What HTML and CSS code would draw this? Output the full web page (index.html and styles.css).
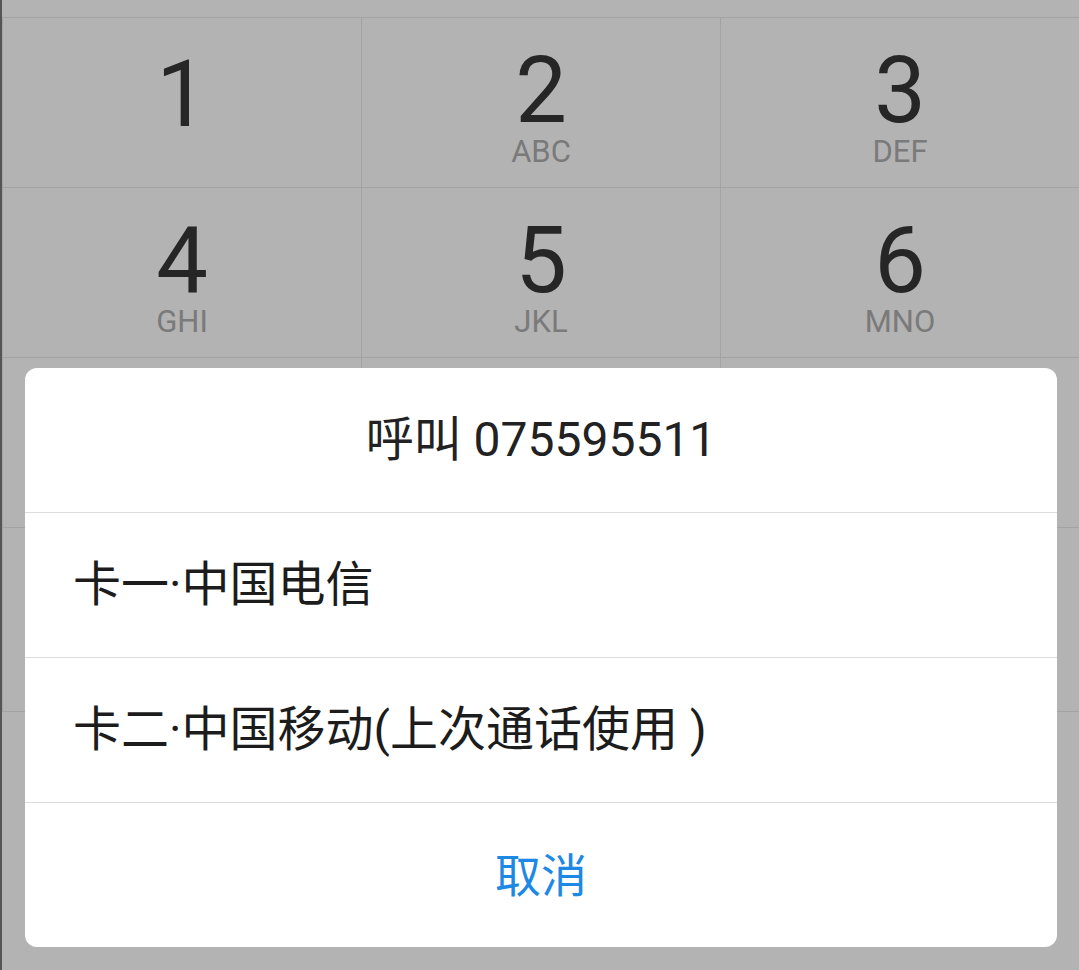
FILE: index.html
```html
<!DOCTYPE html>
<html lang="zh-CN">
<head>
<meta charset="utf-8">
<title>呼叫</title>
<link rel="stylesheet" href="styles.css">
</head>
<body>
<div class="page">
  <div class="top-strip"></div>
  <div class="pad">
    <div class="key key-solo"><span class="digit">1</span></div>
    <div class="key"><span class="digit">2</span><span class="letters">ABC</span></div>
    <div class="key"><span class="digit">3</span><span class="letters">DEF</span></div>
    <div class="key"><span class="digit">4</span><span class="letters">GHI</span></div>
    <div class="key"><span class="digit">5</span><span class="letters">JKL</span></div>
    <div class="key"><span class="digit">6</span><span class="letters">MNO</span></div>
    <div class="key"></div>
    <div class="key"></div>
    <div class="key"></div>
    <div class="key"></div>
    <div class="key"></div>
    <div class="key"></div>
  </div>
</div>
<div class="dialog">
  <div class="dialog-title">呼叫 075595511</div>
  <div class="dialog-item">卡一·中国电信</div>
  <div class="dialog-item">卡二·中国移动(上次通话使用 )</div>
  <div class="dialog-cancel">取消</div>
</div>
</body>
</html>
```
FILE: styles.css
```css
* { box-sizing: border-box; }

html, body {
  margin: 0;
  padding: 0;
}

body {
  width: 1079px;
  height: 970px;
  overflow: hidden;
  background: #b3b3b3;
  font-family: Roboto, "Noto Sans CJK SC", sans-serif;
  position: relative;
}

.page {
  height: 970px;
  border-left: 2px solid #555555;
}

.top-strip {
  height: 17px;
}

.pad {
  display: grid;
  grid-template-columns: repeat(3, 359px);
  grid-template-rows: 170px 170px 170px 184px;
  border-bottom: 1px solid #a3a3a3;
}

.key {
  border-top: 1px solid #a3a3a3;
  border-left: 1px solid #a3a3a3;
  display: flex;
  flex-direction: column;
  align-items: center;
  padding-top: 27px;
}

.key-solo {
  padding-top: 31px;
}

.digit {
  font-size: 92px;
  line-height: 92px;
  color: #262626;
}

.letters {
  font-size: 31px;
  line-height: 30px;
  color: #7a7a7a;
}

.dialog {
  position: absolute;
  left: 25px;
  top: 368px;
  width: 1032px;
  background: #ffffff;
  border-radius: 12px;
  overflow: hidden;
}

.dialog-title,
.dialog-item,
.dialog-cancel {
  height: 145px;
  display: flex;
  align-items: center;
  border-bottom: 1px solid #dddddd;
  padding-bottom: 10px;
}

.dialog-title {
  justify-content: center;
  font-size: 48px;
  color: #222222;
}

.dialog-item {
  padding-left: 48px;
  font-size: 48px;
  color: #1c1c1c;
}

.dialog-cancel {
  height: 144px;
  border-bottom: none;
  justify-content: center;
  font-size: 46px;
  color: #1e88e5;
  padding-bottom: 6px;
}
```
